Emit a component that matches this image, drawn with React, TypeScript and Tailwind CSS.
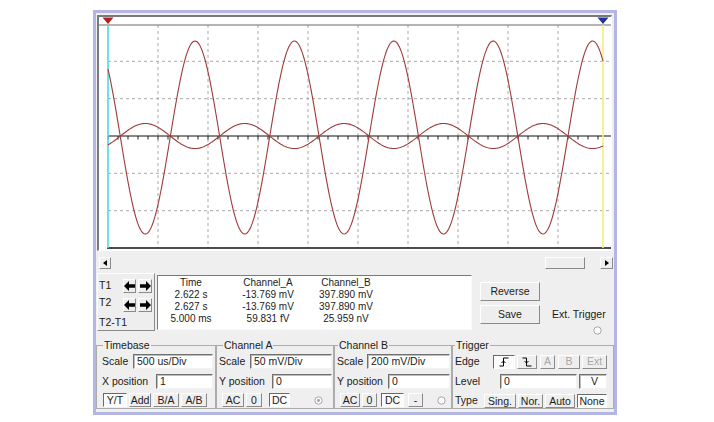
import React from "react";

function wave(center: number, amp: number, sign: number) {
  const pts: string[] = [];
  for (let x = 108; x <= 603; x += 1) {
    const y = center - sign * amp * Math.cos((2 * Math.PI * (x - 195)) / 99.4);
    pts.push(`${x},${y.toFixed(2)}`);
  }
  return pts.join(" ");
}

function Screen() {
  const vlines = [158, 208, 258, 308, 358, 408, 458, 508, 558];
  const hlines = [61.3, 98.7, 173.3, 210.7];
  const ticks: number[] = [];
  for (let x = 108; x <= 606; x += 10) ticks.push(x);
  return (
    <svg width={512} height={233} viewBox="99 17 512 233" className="block">
      <rect x={99} y={17} width={512} height={233} fill="#ffffff" />
      {vlines.map((x) => (
        <line key={x} x1={x} y1={25} x2={x} y2={248} stroke="#a9a9a9" strokeWidth={1} strokeDasharray="3 3" />
      ))}
      {hlines.map((y) => (
        <line key={y} x1={108} y1={y} x2={611} y2={y} stroke="#a9a9a9" strokeWidth={1} strokeDasharray="3 3" />
      ))}
      <line x1={99} y1={25} x2={611} y2={25} stroke="#6a6a6a" strokeWidth={1} />
      <line x1={108} y1={136} x2={611} y2={136} stroke="#111" strokeWidth={1.2} />
      {ticks.map((x) => (
        <line key={x} x1={x} y1={136} x2={x} y2={139.5} stroke="#222" strokeWidth={1} />
      ))}
      <line x1={107} y1={248} x2={611} y2={248} stroke="#111" strokeWidth={1.4} />
      <line x1={108} y1={25} x2={108} y2={248} stroke="#53d6e0" strokeWidth={1.6} />
      <line x1={603} y1={25} x2={603} y2={248} stroke="#f2ee7c" strokeWidth={1.6} />
      <polyline points={wave(137.5, 96.5, 1)} fill="none" stroke="#a03a3a" strokeWidth={1.1} />
      <polyline points={wave(136, 12.5, -1)} fill="none" stroke="#a03a3a" strokeWidth={1.1} />
      <polygon points="102.5,17.5 113.5,17.5 108,24" fill="#b3201f" />
      <polygon points="597.5,17.5 608.5,17.5 603,24" fill="#23339e" />
    </svg>
  );
}

function Arrow({ dir }: { dir: "l" | "r" }) {
  return (
    <svg width={11} height={10} viewBox="0 0 11 10">
      {dir === "l" ? (
        <polygon points="0,5 5,0 5,3.3 11,3.3 11,6.7 5,6.7 5,10" fill="#000" />
      ) : (
        <polygon points="11,5 6,0 6,3.3 0,3.3 0,6.7 6,6.7 6,10" fill="#000" />
      )}
    </svg>
  );
}

function Radio({ dot }: { dot?: boolean }) {
  return (
    <svg width={9} height={9} viewBox="0 0 9 9" className="block">
      <circle cx={4.5} cy={4.5} r={3.7} fill="#fafafa" stroke="#a8a8a8" strokeWidth={1} />
      {dot ? <circle cx={4.5} cy={4.5} r={1.4} fill="#a0a0a0" /> : null}
    </svg>
  );
}

const raised =
  "border border-t-white border-l-white border-r-[#8a8a8a] border-b-[#8a8a8a] bg-[#eeeeee]";
const sunken =
  "border border-t-[#6a6a6a] border-l-[#6a6a6a] border-r-white border-b-white bg-[#fbfbfb]";

function Btn({
  children,
  className,
  pressed,
  disabled,
}: {
  children: React.ReactNode;
  className: string;
  pressed?: boolean;
  disabled?: boolean;
}) {
  return (
    <div
      className={`h-[14px] flex items-center justify-center leading-none ${pressed ? sunken : raised} ${
        disabled ? "text-[#a9a9a9]" : ""
      } ${className}`}
    >
      {children}
    </div>
  );
}

function Input({ value, className }: { value: string; className: string }) {
  return (
    <div
      className={`h-[15px] flex items-center pl-[3px] leading-none bg-white border border-t-[#707070] border-l-[#707070] border-r-[#f2f2f2] border-b-[#f2f2f2] shadow-[inset_1px_1px_0_#bdbdbd] ${className}`}
    >
      {value}
    </div>
  );
}

function RiseIcon() {
  return (
    <svg width={10} height={10} viewBox="0 0 10 10">
      <path d="M0.5 9 H4.5 V1 H9.5" fill="none" stroke="#000" strokeWidth={1} />
      <path d="M2.5 6 L4.5 4 L6.5 6" fill="none" stroke="#000" strokeWidth={1} />
    </svg>
  );
}

function FallIcon() {
  return (
    <svg width={10} height={10} viewBox="0 0 10 10">
      <path d="M0.5 1 H4.5 V9 H9.5" fill="none" stroke="#000" strokeWidth={1} />
      <path d="M2.5 4 L4.5 6 L6.5 4" fill="none" stroke="#000" strokeWidth={1} />
    </svg>
  );
}

export default function App() {
  return (
    <div className="w-[714px] h-[422px] bg-white pt-[10px] pl-[93px] font-['Liberation_Sans',Arial,sans-serif] text-[10.5px] text-[#1b1b1b] overflow-hidden">
      <div className="w-[524px] h-[405px] border-[3px] border-[#b3b6e2] bg-[#efefef] flex flex-col">
        {/* scope screen */}
        <div className="ml-[1px] mt-[2px] w-[515px] h-[236px] border-t-2 border-l-2 border-r border-b border-t-[#7a7a7a] border-l-[#7a7a7a] border-r-[#fdfdfd] border-b-[#fdfdfd]">
          <Screen />
        </div>

        {/* scrollbar */}
        <div className="mt-[6px] ml-[3px] w-[514px] h-[12px] flex">
          <div className={`w-[12px] h-[12px] flex items-center justify-center ${raised}`}>
            <svg width={4} height={6} viewBox="0 0 4 6">
              <polygon points="0,3 4,0 4,6" fill="#000" />
            </svg>
          </div>
          <div className="flex-1" />
          <div className={`w-[40px] h-[12px] ${raised}`} />
          <div className="w-[15px]" />
          <div className={`w-[13px] h-[12px] flex items-center justify-center ${raised}`}>
            <svg width={4} height={6} viewBox="0 0 4 6">
              <polygon points="4,3 0,0 0,6" fill="#000" />
            </svg>
          </div>
        </div>

        {/* cursor readout row */}
        <div className="mt-[4px] h-[58px] flex">
          <div className={`ml-[1px] w-[58px] h-[58px] flex flex-col pl-[1px] ${raised}`}>
            <div className="mt-[5px] h-[14px] flex items-center">
              <span className="w-[24px]">T1</span>
              <div className={`w-[13px] h-[14px] flex items-center justify-center ${raised}`}>
                <Arrow dir="l" />
              </div>
              <div className={`ml-[2px] w-[14px] h-[14px] flex items-center justify-center ${raised}`}>
                <Arrow dir="r" />
              </div>
            </div>
            <div className="mt-[5px] h-[14px] flex items-center">
              <span className="w-[24px] -mt-[4px]">T2</span>
              <div className={`w-[13px] h-[14px] flex items-center justify-center ${raised}`}>
                <Arrow dir="l" />
              </div>
              <div className={`ml-[2px] w-[14px] h-[14px] flex items-center justify-center ${raised}`}>
                <Arrow dir="r" />
              </div>
            </div>
            <div className="mt-[4px] leading-[12px]">T2-T1</div>
          </div>

          <div className="ml-[2px] mt-[2px] w-[315px] h-[55px] bg-white border border-t-[#7a7a7a] border-l-[#7a7a7a] border-r-[#fafafa] border-b-[#fafafa] pt-[1px]">
            <div className="grid grid-cols-[66px_88px_68px] text-center leading-[12px] text-[10px]">
              <span>Time</span>
              <span>Channel_A</span>
              <span>Channel_B</span>
              <span>2.622 s</span>
              <span>-13.769 mV</span>
              <span>397.890 mV</span>
              <span>2.627 s</span>
              <span>-13.769 mV</span>
              <span>397.890 mV</span>
              <span>5.000 ms</span>
              <span>59.831 fV</span>
              <span>25.959 nV</span>
            </div>
          </div>

          <div className="ml-[8px] w-[60px] flex flex-col">
            <div className={`mt-[9px] h-[19px] flex items-center justify-center ${raised}`}>Reverse</div>
            <div className={`mt-[4px] h-[19px] flex items-center justify-center ${raised}`}>Save</div>
          </div>

          <div className="ml-[12px] flex flex-col">
            <div className="mt-[35px] leading-[12px]">Ext. Trigger</div>
            <div className="mt-[6px] ml-[41px]">
              <Radio />
            </div>
          </div>
        </div>

        {/* control groups */}
        <div className="mt-[8px] h-[70px] flex">
          {/* Timebase */}
          <fieldset className="w-[120px] h-[70px] border border-[#acacac]">
            <legend className="ml-[6px] px-[1px] leading-[12px]">Timebase</legend>
            <div className="mt-[3px] h-[15px] flex items-center pl-[5px]">
              <span className="w-[31px]">Scale</span>
              <Input value="500 us/Div" className="w-[80px]" />
            </div>
            <div className="mt-[5px] h-[15px] flex items-center pl-[5px]">
              <span className="w-[54px]">X position</span>
              <Input value="1" className="w-[57px]" />
            </div>
            <div className="mt-[4px] flex pl-[6px] gap-[2px]">
              <Btn className="w-[24px]" pressed>
                Y/T
              </Btn>
              <Btn className="w-[22px]">Add</Btn>
              <Btn className="w-[26px]">B/A</Btn>
              <Btn className="w-[26px]">A/B</Btn>
            </div>
          </fieldset>

          {/* Channel A */}
          <fieldset className="w-[118px] h-[70px] border border-[#acacac]">
            <legend className="ml-[6px] px-[1px] leading-[12px]">Channel A</legend>
            <div className="mt-[3px] h-[15px] flex items-center pl-[2px]">
              <span className="w-[31px]">Scale</span>
              <Input value="50 mV/Div" className="w-[82px]" />
            </div>
            <div className="mt-[5px] h-[15px] flex items-center pl-[2px]">
              <span className="w-[53px]">Y position</span>
              <Input value="0" className="w-[60px]" />
            </div>
            <div className="mt-[4px] flex items-center pl-[5px]">
              <Btn className="w-[22px]">AC</Btn>
              <Btn className="ml-[2px] w-[16px]">0</Btn>
              <Btn className="ml-[7px] w-[21px]" pressed>
                DC
              </Btn>
              <div className="ml-[24px]">
                <Radio dot />
              </div>
            </div>
          </fieldset>

          {/* Channel B */}
          <fieldset className="w-[118px] h-[70px] border border-[#acacac]">
            <legend className="ml-[3px] px-[1px] leading-[12px]">Channel B</legend>
            <div className="mt-[3px] h-[15px] flex items-center pl-[2px]">
              <span className="w-[30px]">Scale</span>
              <Input value="200 mV/Div" className="w-[83px]" />
            </div>
            <div className="mt-[5px] h-[15px] flex items-center pl-[2px]">
              <span className="w-[51px]">Y position</span>
              <Input value="0" className="w-[62px]" />
            </div>
            <div className="mt-[4px] flex items-center pl-[5px]">
              <Btn className="w-[20px]">AC</Btn>
              <Btn className="ml-[2px] w-[15px]">0</Btn>
              <Btn className="ml-[4px] w-[23px]" pressed>
                DC
              </Btn>
              <Btn className="ml-[4px] w-[15px]">-</Btn>
              <div className="ml-[14px]">
                <Radio />
              </div>
            </div>
          </fieldset>

          {/* Trigger */}
          <fieldset className="w-[162px] h-[70px] border border-[#acacac]">
            <legend className="ml-[2px] px-[1px] leading-[12px]">Trigger</legend>
            <div className="mt-[3px] h-[15px] flex items-center pl-[2px]">
              <span className="w-[38px]">Edge</span>
              <Btn className="w-[22px]" pressed>
                <RiseIcon />
              </Btn>
              <Btn className="ml-[2px] w-[20px]">
                <FallIcon />
              </Btn>
              <Btn className="ml-[3px] w-[15px]" disabled>
                A
              </Btn>
              <Btn className="ml-[3px] w-[22px]" disabled>
                B
              </Btn>
              <Btn className="ml-[2px] w-[25px]" disabled>
                Ext
              </Btn>
            </div>
            <div className="mt-[5px] h-[15px] flex items-center pl-[2px]">
              <span className="w-[45px]">Level</span>
              <Input value="0" className="w-[77px]" />
              <Input value="V" className="ml-[2px] w-[28px] justify-center pl-0" />
            </div>
            <div className="mt-[4px] flex items-center pl-[2px]">
              <span className="w-[29px]">Type</span>
              <Btn className="w-[32px]">Sing.</Btn>
              <Btn className="ml-[2px] w-[25px]">Nor.</Btn>
              <Btn className="ml-[2px] w-[30px]">Auto</Btn>
              <Btn className="ml-[2px] w-[30px]" pressed>
                None
              </Btn>
            </div>
          </fieldset>
        </div>
      </div>
    </div>
  );
}
